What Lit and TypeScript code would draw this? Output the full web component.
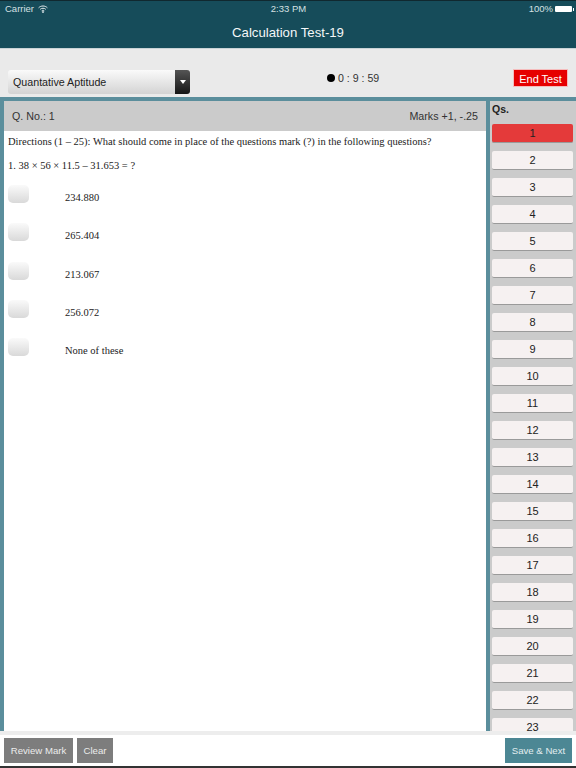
import { LitElement, html, css } from "lit";
import { customElement } from "lit/decorators.js";

const options = ["234.880", "265.404", "213.067", "256.072", "None of these"];
const nums = Array.from({ length: 23 }, (_, i) => i + 1);

@customElement("app-root")
export class AppRoot extends LitElement {
  static styles = css`
    :host { display: block; width: 576px; height: 768px; overflow: hidden; font-family: "Liberation Sans", Arial, sans-serif; background: #fff; color: #222; }
    .page { display: flex; flex-direction: column; height: 768px; }
    .header { height: 47px; flex: none; background: #164c5a; border-top: 1px solid #10282f; color: #fff; display: flex; flex-direction: column; box-sizing: content-box; }
    .status { height: 15px; display: grid; grid-template-columns: 1fr auto 1fr; align-items: center; padding: 0 4px 0 5px; font-size: 9.5px; color: #d5e0e3; }
    .carrier { display: flex; align-items: center; gap: 4px; }
    .batt { display: flex; justify-content: flex-end; align-items: center; gap: 2px; }
    .battery { width: 17px; height: 6px; background: #fff; border-radius: 1px; position: relative; }
    .battery::after { content: ""; position: absolute; right: -2px; top: 2px; width: 1px; height: 3px; background: #fff; }
    .title { text-align: center; font-size: 13.2px; line-height: 16px; margin-top: 9px; color: #f4f7f8; }
    .toolbar { height: 49px; flex: none; background: #eaeaea; border-top: 1px solid #c9d3d6; box-sizing: border-box; display: flex; align-items: flex-end; padding: 0 8px 3px 8px; }
    .select { width: 182px; height: 24px; display: flex; border-radius: 3px; overflow: hidden; font-size: 10.7px; }
    .select-label { flex: 1; background: linear-gradient(#fafafa, #d3d3d3); padding-left: 5px; line-height: 25px; color: #222; }
    .select-btn { width: 15px; background: linear-gradient(#555, #151515); display: flex; align-items: center; justify-content: center; }
    .tri { width: 0; height: 0; border-left: 3px solid transparent; border-right: 3px solid transparent; border-top: 4px solid #fff; }
    .timer { margin-left: 137px; display: flex; align-items: center; gap: 3px; font-size: 10.6px; height: 23px; margin-bottom: 5px; color: #333; width: 186px; }
    .clock { width: 8px; height: 8px; background: #000; border-radius: 50%; }
    .end { margin-left: auto; width: 55px; height: 18px; background: #e60000; color: #fff; font-size: 11px; line-height: 18px; text-align: center; border: 0.5px solid #f5bcbc; box-sizing: border-box; margin-bottom: 7px; flex: none; }
    .main { flex: 1; min-height: 0; display: flex; background: #5b8e9c; padding: 4px 0 0 4px; }
    .panel { width: 482px; flex: none; background: #fff; display: flex; flex-direction: column; }
    .qhead { height: 30px; flex: none; background: #cbcbcb; display: flex; justify-content: space-between; align-items: center; padding: 0 8px 0 8px; font-size: 10.7px; color: #333; }
    .q { font-family: "Liberation Serif", "Times New Roman", serif; font-size: 10.5px; color: #222; padding: 0 0 0 4px; }
    .dir { margin: 5px 0 0; line-height: 12px; }
    .eq { margin: 11.5px 0 0; line-height: 12px; }
    .opts { display: flex; flex-direction: column; margin-top: 13.5px; gap: 18.25px; }
    .opt { display: flex; height: 20px; }
    .radio { width: 21px; height: 18px; border-radius: 5px; background: linear-gradient(#fafafa, #d9d9d9); }
    .opt span { margin-left: 36px; line-height: 12px; margin-top: 7px; }
    .side { flex: 1; margin-left: 4px; background: #cbcbcb; padding: 0 3px 0 2px; overflow: hidden; min-width: 0; }
    .qs { font-size: 10.5px; font-weight: bold; height: 23px; line-height: 16px; color: #222; }
    .list { display: flex; flex-direction: column; gap: 8px; }
    .n { height: 19px; flex: none; background: #f6f1f1; border-radius: 2px; border-bottom: 1.5px solid #9a9a9a; box-sizing: border-box; text-align: center; font-size: 11px; line-height: 18px; color: #222; }
    .n.on { background: #e43a3a; }
    .footer { flex: none; background: #fff; border-top: 4px solid #ededed; border-bottom: 2px solid #333; box-sizing: content-box; height: 31px; display: flex; align-items: center; padding: 0 4px; gap: 4px; }
    .b { height: 25px; color: #ececec; font-size: 9.6px; line-height: 25px; text-align: center; box-sizing: border-box; flex: none; }
    .grey { background: #7d7d7d; }
    .review { width: 69px; }
    .clear { width: 36px; }
    .save { margin-left: auto; width: 67px; background: #4c8794; color: #e3eef0; }
  `;

  render() {
    return html`<div class="page">
      <div class="header">
        <div class="status">
          <div class="carrier">Carrier
            <svg width="10" height="8" viewBox="0 0 10 8" fill="none" stroke="#e5ecee" stroke-width="1">
              <path d="M.6 2.8C3 .4 7 .4 9.4 2.8M2.2 4.3c1.5-1.4 4.1-1.4 5.6 0M3.7 5.8c.7-.6 1.9-.6 2.6 0"/><circle cx="5" cy="7" r=".5" fill="#e5ecee"/>
            </svg>
          </div>
          <div>2:33 PM</div>
          <div class="batt">100%<div class="battery"></div></div>
        </div>
        <div class="title">Calculation Test-19</div>
      </div>
      <div class="toolbar">
        <div class="select"><div class="select-label">Quantative Aptitude</div><div class="select-btn"><div class="tri"></div></div></div>
        <div class="timer"><div class="clock"></div>0 : 9 : 59</div>
        <div class="end">End Test</div>
      </div>
      <div class="main">
        <div class="panel">
          <div class="qhead"><span>Q. No.: 1</span><span>Marks +1, -.25</span></div>
          <div class="q">
            <p class="dir">Directions (1 – 25): What should come in place of the questions mark (?) in the following questions?</p>
            <p class="eq">1. 38 × 56 × 11.5 – 31.653 = ?</p>
            <div class="opts">${options.map((o) => html`<div class="opt"><div class="radio"></div><span>${o}</span></div>`)}</div>
          </div>
        </div>
        <div class="side">
          <div class="qs">Qs.</div>
          <div class="list">${nums.map((n) => html`<div class="n ${n === 1 ? "on" : ""}">${n}</div>`)}</div>
        </div>
      </div>
      <div class="footer">
        <div class="b grey review">Review Mark</div>
        <div class="b grey clear">Clear</div>
        <div class="b save">Save &amp; Next</div>
      </div>
    </div>`;
  }
}
